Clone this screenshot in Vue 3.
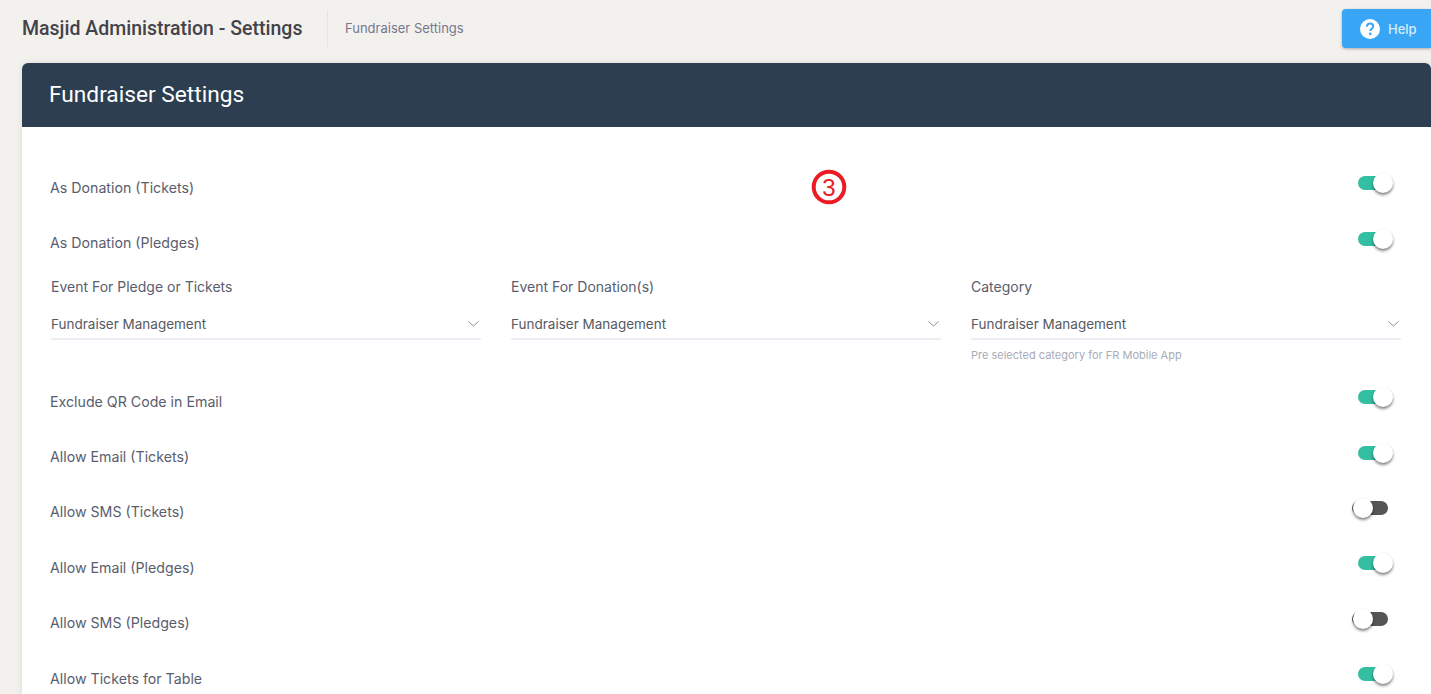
<script setup>
const topRows = [
  { label: 'As Donation (Tickets)', on: true },
  { label: 'As Donation (Pledges)', on: true },
]
const fields = [
  { label: 'Event For Pledge or Tickets', value: 'Fundraiser Management' },
  { label: 'Event For Donation(s)', value: 'Fundraiser Management' },
  { label: 'Category', value: 'Fundraiser Management', hint: 'Pre selected category for FR Mobile App' },
]
const rows = [
  { label: 'Exclude QR Code in Email', on: true },
  { label: 'Allow Email (Tickets)', on: true },
  { label: 'Allow SMS (Tickets)', on: false },
  { label: 'Allow Email (Pledges)', on: true },
  { label: 'Allow SMS (Pledges)', on: false },
  { label: 'Allow Tickets for Table', on: true },
]
</script>

<template>
  <div class="page">
    <header class="topbar">
      <h1 class="title">Masjid Administration - Settings</h1>
      <div class="crumb">Fundraiser Settings</div>
      <button class="help" type="button">
        <svg class="help-icon" viewBox="0 0 20 20" aria-hidden="true">
          <circle cx="10" cy="10" r="10" fill="#fff" />
          <path d="M6.9 7.6c.1-1.9 1.4-3 3.2-3 1.8 0 3.1 1.1 3.1 2.7 0 1.200-.6 1.900-1.600 2.600-.9.6-1.100.9-1.100 1.700v.4" fill="none" stroke="#38a6f5" stroke-width="2" />
          <circle cx="10.300" cy="14.900" r="1.300" fill="#38a6f5" />
        </svg>
        <span>Help</span>
      </button>
    </header>

    <section class="card">
      <div class="card-head">Fundraiser Settings</div>
      <div class="card-body">
        <div v-for="r in topRows" :key="r.label" class="row">
          <span class="row-label">{{ r.label }}</span>
          <span class="toggle" :class="{ on: r.on }"><i class="knob"></i></span>
        </div>

        <div class="fields">
          <div v-for="f in fields" :key="f.label" class="field">
            <div class="field-label">{{ f.label }}</div>
            <div class="select">
              <span>{{ f.value }}</span>
              <svg class="chev" viewBox="0 0 11 6" aria-hidden="true">
                <path d="M.5.5 5.500 5 10.500.5" fill="none" stroke="#8d8d95" stroke-width="1" />
              </svg>
            </div>
            <div v-if="f.hint" class="hint">{{ f.hint }}</div>
          </div>
        </div>

        <div v-for="r in rows" :key="r.label" class="row">
          <span class="row-label">{{ r.label }}</span>
          <span class="toggle" :class="{ on: r.on }"><i class="knob"></i></span>
        </div>
      </div>

      <svg class="mark" viewBox="0 0 36 36" aria-hidden="false">
        <circle cx="18" cy="18" r="15.300" fill="#fff" stroke="#ec1c24" stroke-width="4" />
        <text x="18" y="26.500" text-anchor="middle" class="mark-text">3</text>
      </svg>
    </section>
  </div>
</template>

<style>
html, body {
  margin: 0;
  height: 100%;
  overflow: hidden;
  background: #f3f1ee;
}
</style>

<style scoped>
.page {
  height: 694px;
  overflow: hidden;
  background: #f3f1ee;
  color: #595d6e;
  font-family: Inter, "Open Sans", sans-serif;
}
.topbar {
  display: flex;
  align-items: flex-start;
  height: 63px;
  padding-left: 22px;
  box-sizing: border-box;
}
.title {
  margin: 10px 0 0;
  width: 305px;
  height: 37px;
  border-right: 1px solid #e3e4e8;
  font: 500 19.500px/37px Roboto, sans-serif;
  color: #434349;
}
.crumb {
  margin: 10px 0 0 17px;
  font-size: 13px;
  line-height: 36px;
  color: #74788d;
}
.help {
  display: flex;
  align-items: center;
  gap: 8px;
  box-sizing: border-box;
  width: 89px;
  height: 39px;
  margin: 9px 0 0 auto;
  padding: 0 0 0 18px;
  border: 0;
  border-radius: 4px 0 0 4px;
  background: #38a6f5;
  box-shadow: 0 1px 3px rgba(0, 0, 0, .3);
  color: #d4ecfd;
  font: 500 13px Inter, sans-serif;
}
.help-icon {
  width: 20px;
  height: 20px;
}
.card {
  position: relative;
  margin-left: 22px;
  background: #fff;
  border-radius: 6px 6px 0 0;
  box-shadow: 0 0 6px rgba(80, 80, 90, .12);
}
.card-head {
  box-sizing: border-box;
  height: 64px;
  padding-left: 27px;
  border-radius: 6px 6px 0 0;
  background: #2c3e50;
  color: #fff;
  font: 400 22.700px/64px Roboto, sans-serif;
}
.card-body {
  padding: 32.700px 30px 0 28px;
}
.row {
  display: flex;
  align-items: center;
  justify-content: space-between;
  height: 55.400px;
}
.row-label {
  font-size: 14.200px;
  color: #595d6e;
}
.toggle {
  position: relative;
  display: block;
  flex: none;
  width: 36px;
  height: 14px;
  margin: 0 13px 8px 0;
  border-radius: 7px;
  background: #555;
}
.toggle.on {
  background: #34bfa3;
  width: 32px;
  margin-right: 11px;
}
.knob {
  position: absolute;
  top: -3px;
  left: 1px;
  width: 20px;
  height: 20px;
  border-radius: 50%;
  background: #fff;
  box-shadow: 0 2px 3px rgba(0, 0, 0, .5);
}
.toggle.on .knob {
  left: auto;
  right: -3px;
}
.fields {
  display: grid;
  grid-template-columns: repeat(3, 1fr);
  column-gap: 30px;
  height: 103px;
  margin-left: 1px;
}
.field-label {
  margin-top: 6px;
  font-size: 14px;
  line-height: 22px;
  color: #595d6e;
}
.select {
  display: flex;
  align-items: center;
  justify-content: space-between;
  box-sizing: border-box;
  height: 30px;
  margin-top: 12px;
  padding: 0 2px 0 0;
  border-bottom: 2px solid #ebedf2;
  font-size: 13.500px;
  color: #575962;
}
.chev {
  width: 11px;
  height: 6px;
}
.hint {
  margin-top: 8px;
  font-size: 11px;
  color: #a7abb8;
}
.mark {
  position: absolute;
  left: 789px;
  top: 106px;
  width: 36px;
  height: 36px;
}
.mark-text {
  font: 400 24px "Liberation Sans", sans-serif;
  fill: #ec1c24;
}
</style>
